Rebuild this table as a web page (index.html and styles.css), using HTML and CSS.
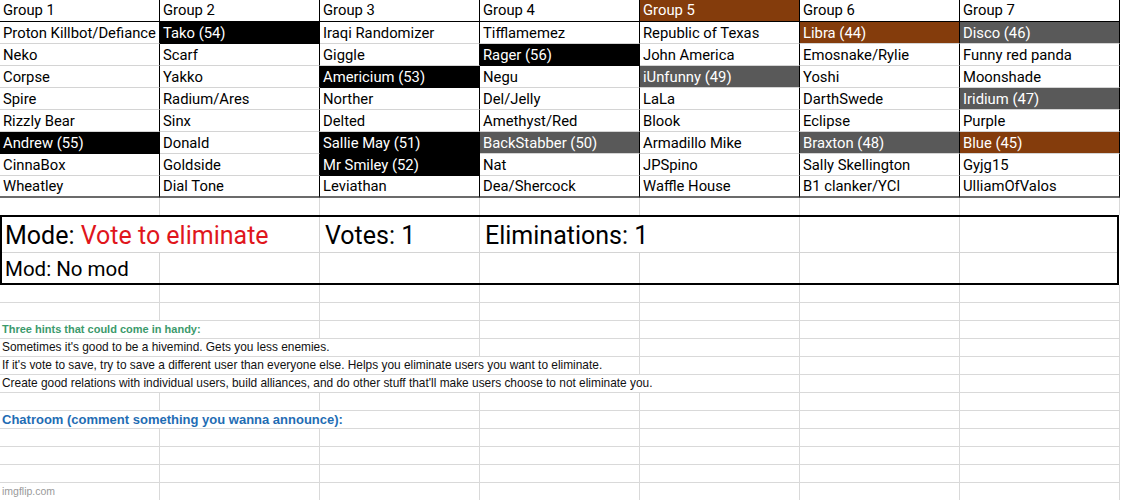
FILE: index.html
```html
<!DOCTYPE html>
<html>
<head>
<meta charset="utf-8">
<link rel="stylesheet" href="styles.css">
</head>
<body>
<div class="page">
  <div class="groups">
    <div class="c h">Group 1</div><div class="c h">Group 2</div><div class="c h">Group 3</div><div class="c h">Group 4</div><div class="c h brown">Group 5</div><div class="c h">Group 6</div><div class="c h">Group 7</div>

    <div class="c">Proton Killbot/Defiance</div><div class="c black">Tako (54)</div><div class="c">Iraqi Randomizer</div><div class="c">Tifflamemez</div><div class="c">Republic of Texas</div><div class="c brown">Libra (44)</div><div class="c gray">Disco (46)</div>

    <div class="c">Neko</div><div class="c">Scarf</div><div class="c">Giggle</div><div class="c black">Rager (56)</div><div class="c">John America</div><div class="c">Emosnake/Rylie</div><div class="c">Funny red panda</div>

    <div class="c">Corpse</div><div class="c">Yakko</div><div class="c black">Americium (53)</div><div class="c">Negu</div><div class="c gray">iUnfunny (49)</div><div class="c">Yoshi</div><div class="c">Moonshade</div>

    <div class="c">Spire</div><div class="c">Radium/Ares</div><div class="c">Norther</div><div class="c">Del/Jelly</div><div class="c">LaLa</div><div class="c">DarthSwede</div><div class="c gray">Iridium (47)</div>

    <div class="c">Rizzly Bear</div><div class="c">Sinx</div><div class="c">Delted</div><div class="c">Amethyst/Red</div><div class="c">Blook</div><div class="c">Eclipse</div><div class="c">Purple</div>

    <div class="c black">Andrew (55)</div><div class="c">Donald</div><div class="c black joined">Sallie May (51)</div><div class="c gray">BackStabber (50)</div><div class="c">Armadillo Mike</div><div class="c gray">Braxton (48)</div><div class="c brown">Blue (45)</div>

    <div class="c">CinnaBox</div><div class="c">Goldside</div><div class="c black">Mr Smiley (52)</div><div class="c">Nat</div><div class="c">JPSpino</div><div class="c">Sally Skellington</div><div class="c">Gyjg15</div>

    <div class="c last">Wheatley</div><div class="c last">Dial Tone</div><div class="c last">Leviathan</div><div class="c last">Dea/Shercock</div><div class="c last">Waffle House</div><div class="c last">B1 clanker/YCl</div><div class="c last">UlliamOfValos</div>
  </div>

  <div class="spacer">
    <div class="g"></div><div class="g"></div><div class="g"></div><div class="g"></div><div class="g"></div><div class="g"></div><div class="g"></div>
  </div>

  <div class="status">
    <div class="s big span2 first">Mode: <span class="red">Vote to eliminate</span></div>
    <div class="s big">Votes: 1</div>
    <div class="s big span2">Eliminations: 1</div>
    <div class="s"></div>
    <div class="s end"></div>

    <div class="s mid first">Mod: No mod</div>
    <div class="s mid"></div>
    <div class="s mid"></div>
    <div class="s mid"></div>
    <div class="s mid"></div>
    <div class="s mid"></div>
    <div class="s mid end"></div>
  </div>

  <div class="lower">
    <div class="g"></div><div class="g"></div><div class="g"></div><div class="g"></div><div class="g"></div><div class="g"></div><div class="g"></div>
    <div class="g"></div><div class="g"></div><div class="g"></div><div class="g"></div><div class="g"></div><div class="g"></div><div class="g"></div>

    <div class="g span2 hinthead">Three hints that could come in handy:</div><div class="g"></div><div class="g"></div><div class="g"></div><div class="g"></div><div class="g"></div>

    <div class="g span3 hint">Sometimes it's good to be a hivemind. Gets you less enemies.</div><div class="g"></div><div class="g"></div><div class="g"></div><div class="g"></div>

    <div class="g span4 hint">If it's vote to save, try to save a different user than everyone else. Helps you eliminate users you want to eliminate.</div><div class="g"></div><div class="g"></div><div class="g"></div>

    <div class="g span5 hint">Create good relations with individual users, build alliances, and do other stuff that'll make users choose to not eliminate you.</div><div class="g"></div><div class="g"></div>

    <div class="g"></div><div class="g"></div><div class="g"></div><div class="g"></div><div class="g"></div><div class="g"></div><div class="g"></div>

    <div class="g span3 chat">Chatroom (comment something you wanna announce):</div><div class="g"></div><div class="g"></div><div class="g"></div><div class="g"></div>

    <div class="g"></div><div class="g"></div><div class="g"></div><div class="g"></div><div class="g"></div><div class="g"></div><div class="g"></div>
    <div class="g"></div><div class="g"></div><div class="g"></div><div class="g"></div><div class="g"></div><div class="g"></div><div class="g"></div>
    <div class="g"></div><div class="g"></div><div class="g"></div><div class="g"></div><div class="g"></div><div class="g"></div><div class="g"></div>
    <div class="g wm">imgflip.com</div><div class="g"></div><div class="g"></div><div class="g"></div><div class="g"></div><div class="g"></div><div class="g"></div>
  </div>
</div>
</body>
</html>
```

FILE: styles.css
```css
* { box-sizing: border-box; }

html, body {
  margin: 0;
  padding: 0;
  background: #ffffff;
}

.page {
  width: 1123px;
  height: 500px;
  overflow: hidden;
  font-family: Roboto, "Liberation Sans", sans-serif;
  color: #000;
}

.groups {
  display: grid;
  grid-template-columns: repeat(7, 160px);
  grid-auto-rows: 22px;
}

.c {
  font-size: 14.8px;
  line-height: 22px;
  padding-left: 3px;
  white-space: nowrap;
  overflow: hidden;
  border-right: 1px solid #000;
  border-bottom: 1px solid #d4d4d4;
}

.c.h {
  border-bottom-color: #000;
  line-height: 20px;
}

.c.last {
  border-bottom: 2px solid #6b6b6b;
  line-height: 21px;
}

.black { background: #000; color: #fff; border-bottom-color: #000; }
.gray { background: #595959; color: #fff; }
.brown { background: #843c0c; color: #fff; }
.joined { border-bottom-color: #000; }

.spacer {
  display: grid;
  grid-template-columns: repeat(7, 160px);
  height: 17px;
}

.g {
  border-right: 1px solid #d9d9d9;
  border-bottom: 1px solid #d9d9d9;
  white-space: nowrap;
  overflow: visible;
}

.spacer .g { border-bottom: none; }

.status {
  display: grid;
  width: 1119px;
  grid-template-columns: 158px 160px 160px 160px 160px 160px 157px;
  grid-template-rows: 36px 30px;
  border: 2px solid #000;
}

.s {
  border-right: 1px solid #d4d4d4;
  border-bottom: 1px solid #d4d4d4;
  white-space: nowrap;
  padding-left: 5px;
}

.s.first { padding-left: 3px; }
.s.mid { border-bottom: none; }
.s.end { border-right: none; }

.big {
  font-size: 25px;
  line-height: 38px;
}

.status .mid {
  font-size: 20.5px;
  line-height: 32px;
}

.red { color: #e0161c; }

.span2 { grid-column: span 2; }
.span3 { grid-column: span 3; }
.span4 { grid-column: span 4; }
.span5 { grid-column: span 5; }

.lower {
  display: grid;
  grid-template-columns: repeat(7, 160px);
  grid-auto-rows: 18px;
}

.lower .g {
  padding-left: 2px;
  line-height: 17px;
}

.hinthead {
  font-family: "Liberation Sans", sans-serif;
  font-size: 11px;
  font-weight: bold;
  color: #3c9a6c;
}

.hint {
  font-family: "Liberation Sans", sans-serif;
  font-size: 11.9px;
  color: #111;
}

.chat {
  font-family: "Liberation Sans", sans-serif;
  font-size: 13px;
  font-weight: bold;
  color: #1f6db4;
}

.wm {
  font-family: "Liberation Sans", sans-serif;
  font-size: 10.5px;
  color: #9a9a9a;
}
```
